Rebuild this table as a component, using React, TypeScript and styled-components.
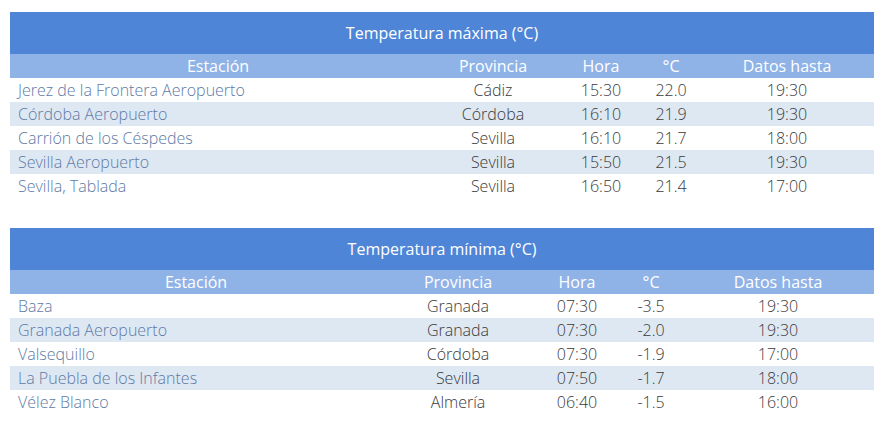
import React from "react";
import styled, { createGlobalStyle } from "styled-components";

const GlobalStyle = createGlobalStyle`
	html, body {
		margin: 0;
		padding: 0;
		background: #ffffff;
	}
	body {
		font-family: "Open Sans", "Liberation Sans", sans-serif;
	}
`;

const Page = styled.div`
	display: flex;
	flex-direction: column;
	gap: 30px;
	padding: 12px 6px 0 10px;
	width: 864px;
`;

const Table = styled.table`
	width: 864px;
	border-collapse: collapse;
	table-layout: fixed;
`;

const Title = styled.th`
	height: 42px;
	padding: 0;
	background: #4f85d7;
	color: #ffffff;
	font-size: 16px;
	font-weight: 400;
	text-align: center;
`;

const HeadCell = styled.th`
	height: 24px;
	padding: 0;
	background: #8fb3e7;
	color: #ffffff;
	font-size: 16px;
	font-weight: 400;
	text-align: center;
`;

const Row = styled.tr<{ $alt: boolean }>`
	height: 24px;
	background: ${(p) => (p.$alt ? "#dee8f3" : "#ffffff")};
`;

const Cell = styled.td`
	padding: 0;
	color: #3a3a3a;
	font-size: 16px;
	line-height: 24px;
	font-weight: 300;
	text-align: center;
	white-space: nowrap;
`;

const StationCell = styled(Cell)`
	padding-left: 8px;
	text-align: left;
	color: #607aa6;
`;

type Entry = [string, string, string, string, string];

interface TempTableProps {
	title: string;
	widths: number[];
	rows: Entry[];
}

const headers = ["Estación", "Provincia", "Hora", "°C", "Datos hasta"];

function TempTable({ title, widths, rows }: TempTableProps) {
	return (
		<Table>
			<colgroup>
				{widths.map((w, i) => (
					<col key={i} style={{ width: w }} />
				))}
			</colgroup>
			<thead>
				<tr>
					<Title colSpan={5}>{title}</Title>
				</tr>
				<tr>
					{headers.map((h) => (
						<HeadCell key={h}>{h}</HeadCell>
					))}
				</tr>
			</thead>
			<tbody>
				{rows.map((r, i) => (
					<Row key={i} $alt={i % 2 === 1}>
						<StationCell>{r[0]}</StationCell>
						<Cell>{r[1]}</Cell>
						<Cell>{r[2]}</Cell>
						<Cell>{r[3]}</Cell>
						<Cell>{r[4]}</Cell>
					</Row>
				))}
			</tbody>
		</Table>
	);
}

const maxRows: Entry[] = [
	["Jerez de la Frontera Aeropuerto", "Cádiz", "15:30", "22.0", "19:30"],
	["Córdoba Aeropuerto", "Córdoba", "16:10", "21.9", "19:30"],
	["Carrión de los Céspedes", "Sevilla", "16:10", "21.7", "18:00"],
	["Sevilla Aeropuerto", "Sevilla", "15:50", "21.5", "19:30"],
	["Sevilla, Tablada", "Sevilla", "16:50", "21.4", "17:00"],
];

const minRows: Entry[] = [
	["Baza", "Granada", "07:30", "-3.5", "19:30"],
	["Granada Aeropuerto", "Granada", "07:30", "-2.0", "19:30"],
	["Valsequillo", "Córdoba", "07:30", "-1.9", "17:00"],
	["La Puebla de los Infantes", "Sevilla", "07:50", "-1.7", "18:00"],
	["Vélez Blanco", "Almería", "06:40", "-1.5", "16:00"],
];

export default function App() {
	return (
		<>
			<GlobalStyle />
			<Page>
				<TempTable
					title="Temperatura máxima (°C)"
					widths={[416, 134, 82, 58, 174]}
					rows={maxRows}
				/>
				<TempTable
					title="Temperatura mínima (°C)"
					widths={[372, 152, 86, 62, 192]}
					rows={minRows}
				/>
			</Page>
		</>
	);
}
